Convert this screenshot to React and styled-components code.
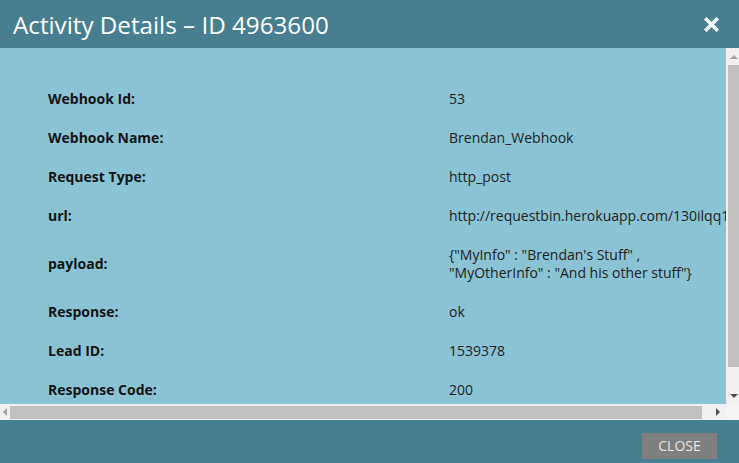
import React from 'react'
import styled, { createGlobalStyle } from 'styled-components'

const GlobalStyle = createGlobalStyle`
  html, body {
    margin: 0;
    padding: 0;
    background: #477f90;
  }
  body {
    font-family: "Open Sans", "Liberation Sans", sans-serif;
  }
`

const Dialog = styled.div`
  display: flex;
  flex-direction: column;
  width: 739px;
  height: 463px;
  overflow: hidden;
  background: #477f90;
`
const Header = styled.header`
  display: flex;
  align-items: center;
  justify-content: space-between;
  height: 48px;
  flex: none;
  padding: 0 20px 0 13px;
  box-sizing: border-box;
`
const Title = styled.h1`
  margin: 0;
  font-size: 24.2px;
  font-weight: 400;
  color: #ffffff;
`
const CloseX = styled.button`
  display: flex;
  padding: 0;
  border: none;
  background: none;
  cursor: pointer;
`
const Body = styled.div`
  flex: 1;
  display: grid;
  grid-template-columns: 1fr 13px;
  grid-template-rows: 1fr 16px;
  min-height: 0;
`
const Viewport = styled.div`
  overflow: hidden;
  background: #8ac3d3;
  min-width: 0;
`
const Details = styled.div`
  display: grid;
  grid-template-columns: 401px max-content;
  width: max-content;
  padding: 31px 0 0 48px;
  font-size: 14px;
  line-height: 18px;
`
const Label = styled.div`
  display: flex;
  align-items: center;
  padding: 10.5px 0;
  font-weight: 700;
  color: #141414;
`
const Value = styled.div`
  display: flex;
  flex-direction: column;
  justify-content: center;
  padding: 10.5px 0;
  color: #1e1e1e;
  white-space: nowrap;
`
const VScroll = styled.div`
  display: flex;
  flex-direction: column;
  background: #f0f0f0;
`
const HScroll = styled.div`
  display: flex;
  background: #f0f0f0;
`
const Corner = styled.div`
  background: #f4f4f4;
`
const ArrowBtn = styled.div`
  display: flex;
  align-items: center;
  justify-content: center;
  flex: none;
  width: ${(p) => p.$w || '100%'};
  height: ${(p) => p.$h || '100%'};
  padding-left: ${(p) => p.$pl || '0'};
  box-sizing: border-box;
`
const VThumb = styled.div`
  height: 302px;
  margin-left: 2px;
  background: #c1c1c1;
`
const HThumb = styled.div`
  width: 692px;
  margin: 2px 0 1px;
  background: #c1c1c1;
`
const Gap = styled.div`
  flex: 1;
`
const Footer = styled.footer`
  display: flex;
  justify-content: flex-end;
  align-items: flex-start;
  height: 43px;
  flex: none;
  padding: 13px 22px 0 0;
  box-sizing: border-box;
`
const CloseButton = styled.button`
  width: 75px;
  height: 26px;
  padding: 0;
  border: none;
  background: #7f7f7f;
  color: #e6e6e6;
  font-family: "Open Sans", "Liberation Sans", sans-serif;
  font-size: 14px;
  line-height: 26px;
  text-transform: uppercase;
  cursor: pointer;
`

function Tri({ dir, color }) {
  const pts = {
    up: '0,5 4,1 8,5',
    down: '0,1 4,5 8,1',
    left: '5,0 1,4 5,8',
    right: '1,0 5,4 1,8',
  }[dir]
  const vertical = dir === 'up' || dir === 'down'
  return (
    <svg width={vertical ? 8 : 6} height={vertical ? 6 : 8} viewBox={vertical ? '0 0 8 6' : '0 0 6 8'}>
      <polygon points={pts} fill={color} />
    </svg>
  )
}

const rows = [
  ['Webhook Id:', ['53']],
  ['Webhook Name:', ['Brendan_Webhook']],
  ['Request Type:', ['http_post']],
  ['url:', ['http://requestbin.herokuapp.com/130ilqq1bq']],
  ['payload:', ['{"MyInfo" : "Brendan\'s Stuff" ,', '"MyOtherInfo" : "And his other stuff"}']],
  ['Response:', ['ok']],
  ['Lead ID:', ['1539378']],
  ['Response Code:', ['200']],
]

export default function App() {
  return (
    <>
      <GlobalStyle />
      <Dialog>
        <Header>
          <Title>Activity Details – ID 4963600</Title>
          <CloseX aria-label="close">
            <svg width="15" height="15" viewBox="0 0 15 15">
              <path d="M2.5 2.5 L12.5 12.5 M12.5 2.5 L2.5 12.5" stroke="#fff" strokeWidth="3.6" strokeLinecap="square" />
            </svg>
          </CloseX>
        </Header>
        <Body>
          <Viewport>
            <Details>
              {rows.map(([label, lines]) => (
                <React.Fragment key={label}>
                  <Label>{label}</Label>
                  <Value>
                    {lines.map((l) => (
                      <span key={l}>{l}</span>
                    ))}
                  </Value>
                </React.Fragment>
              ))}
            </Details>
          </Viewport>
          <VScroll>
            <ArrowBtn $h="17px" $pl="2px">
              <Tri dir="up" color="#a3a3a3" />
            </ArrowBtn>
            <VThumb />
            <Gap />
            <ArrowBtn $h="17px" $pl="2px">
              <Tri dir="down" color="#505050" />
            </ArrowBtn>
          </VScroll>
          <HScroll>
            <ArrowBtn $w="10px">
              <Tri dir="left" color="#a3a3a3" />
            </ArrowBtn>
            <HThumb />
            <Gap />
            <ArrowBtn $w="17px">
              <Tri dir="right" color="#505050" />
            </ArrowBtn>
          </HScroll>
          <Corner />
        </Body>
        <Footer>
          <CloseButton>Close</CloseButton>
        </Footer>
      </Dialog>
    </>
  )
}
